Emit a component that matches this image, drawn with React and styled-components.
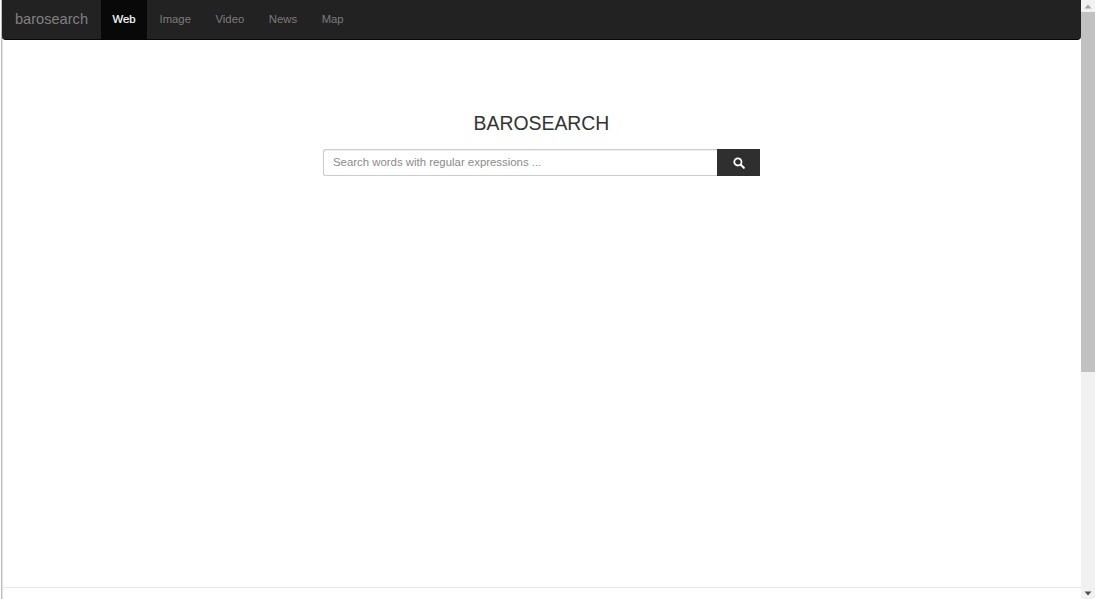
import React from "react";
import styled, { createGlobalStyle } from "styled-components";

const Global = createGlobalStyle`
  html, body { margin: 0; padding: 0; height: 100%; overflow: hidden; background: #fff; }
  #root { height: 100%; }
  * { box-sizing: border-box; }
  input::placeholder { color: #8a8a8a; opacity: 1; }
`;

const Page = styled.div`
  display: flex;
  height: 599px;
  width: 1095px;
  padding-left: 1px;
  font-family: "Liberation Sans", Arial, sans-serif;
  color: #333;
`;

const Main = styled.main`
  flex: 1;
  min-width: 0;
  display: flex;
  flex-direction: column;
  border-left: 1px solid #bdbdbd;
  box-shadow: inset 1px 0 0 #e2e2e2;
`;

const Navbar = styled.nav`
  height: 40px;
  flex: none;
  display: flex;
  background: #222;
  border-bottom: 1px solid #080808;
  border-radius: 0 0 4px 4px;
`;

const Brand = styled.a`
  padding: 0 13px 1px 13px;
  display: flex;
  align-items: center;
  font-size: 14.6px;
  color: #808080;
`;

const NavItem = styled.a`
  padding: 0 ${(p) => (p.$active ? "11.6px" : "12.3px")} 1px;
  display: flex;
  align-items: center;
  font-size: 11.3px;
  color: ${(p) => (p.$active ? "#fff" : "#7c7c7c")};
  background: ${(p) => (p.$active ? "#080808" : "transparent")};
  -webkit-text-stroke: ${(p) => (p.$active ? "0.2px #fff" : "0")};
`;

const Content = styled.section`
  flex: 1;
  display: flex;
  flex-direction: column;
  align-items: center;
  padding-top: 72px;
`;

const Title = styled.h1`
  margin: 0 0 15px;
  height: 22px;
  line-height: 22px;
  font-size: 19.4px;
  font-weight: 400;
  color: #333;
`;

const SearchGroup = styled.form`
  display: flex;
  width: 437px;
  height: 27px;
  margin: 0;
`;

const SearchInput = styled.input`
  flex: 1;
  min-width: 0;
  height: 100%;
  padding: 0 9px 1px;
  border: 1px solid #ccc;
  border-right: 0;
  border-radius: 3px 0 0 3px;
  font: 11.4px "Liberation Sans", Arial, sans-serif;
  color: #555;
  box-shadow: inset 0 1px 1px rgba(0, 0, 0, 0.075);
  outline: none;
`;

const SearchButton = styled.button`
  flex: none;
  width: 43px;
  height: 100%;
  border: 0;
  padding: 1px 0 0;
  display: flex;
  align-items: center;
  justify-content: center;
  background: #2f2f2f;
`;

const Footer = styled.footer`
  flex: none;
  height: 12px;
  border-top: 1px solid #e7e7e7;
`;

const Scrollbar = styled.aside`
  flex: none;
  width: 14px;
  display: flex;
  flex-direction: column;
  background: #f1f1f1;
`;

const ScrollArrow = styled.div`
  flex: none;
  height: 12px;
  display: flex;
  align-items: center;
  justify-content: center;
  svg { display: block; }
`;

const ScrollThumb = styled.div`
  flex: none;
  height: 360px;
  background: #c1c1c1;
`;

const ScrollSpace = styled.div`
  flex: 1;
`;

const SearchIcon = () => (
  <svg width="12" height="12" viewBox="0 0 12 12" aria-hidden="true">
    <circle cx="4.9" cy="4.9" r="3.6" fill="none" stroke="#fff" strokeWidth="1.8" />
    <path d="M7.8 7.8 L10.8 10.8" stroke="#fff" strokeWidth="2.1" strokeLinecap="round" />
  </svg>
);

const Arrow = ({ down }) => (
  <svg width="8" height="5" viewBox="0 0 8 5" aria-hidden="true">
    <path d={down ? "M0.5 0.5 H7.5 L4 4.5 Z" : "M0.5 4.5 H7.5 L4 0.5 Z"} fill={down ? "#505050" : "#a3a3a3"} />
  </svg>
);

const items = ["Image", "Video", "News", "Map"];

export default function App() {
  return (
    <>
      <Global />
      <Page>
        <Main>
          <Navbar>
            <Brand>barosearch</Brand>
            <NavItem $active>Web</NavItem>
            {items.map((t) => (
              <NavItem key={t}>{t}</NavItem>
            ))}
          </Navbar>
          <Content>
            <Title>BAROSEARCH</Title>
            <SearchGroup onSubmit={(e) => e.preventDefault()}>
              <SearchInput placeholder="Search words with regular expressions ..." />
              <SearchButton type="submit" aria-label="Search">
                <SearchIcon />
              </SearchButton>
            </SearchGroup>
          </Content>
          <Footer />
        </Main>
        <Scrollbar>
          <ScrollArrow><Arrow /></ScrollArrow>
          <ScrollThumb />
          <ScrollSpace />
          <ScrollArrow><Arrow down /></ScrollArrow>
        </Scrollbar>
      </Page>
    </>
  );
}
